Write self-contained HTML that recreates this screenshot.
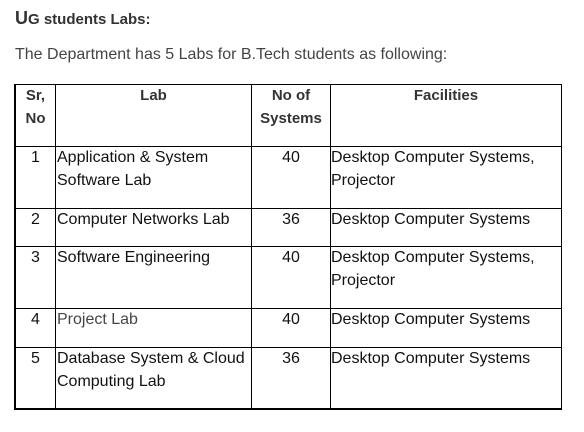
<!DOCTYPE html>
<html><head><style>
body{margin:0;width:584px;height:432px;background:#fff;font-family:"Liberation Sans",Arial,sans-serif;position:relative;overflow:hidden}
.a{position:absolute;white-space:nowrap}
.h{font-weight:bold;color:#333;font-size:15px;text-align:center;line-height:23px}
.t{font-size:16px;color:#111;line-height:23px}
.l{position:absolute;background:#000}
</style></head><body>
<div class="a" style="left:15px;top:8px;font-weight:bold;color:#333;font-size:15px"><span style="font-size:18px">U</span>G students Labs:</div>
<div class="a" style="left:15px;top:46px;font-size:16px;color:#444">The Department has 5 Labs for B.Tech students as following:</div>
<!-- borders -->
<div class="l" style="left:14px;top:84px;width:2px;height:326px"></div>
<div class="l" style="left:561px;top:84px;width:1px;height:326px"></div>
<div class="l" style="left:14px;top:84px;width:548px;height:1px"></div>
<div class="l" style="left:14px;top:146px;width:548px;height:1px"></div>
<div class="l" style="left:14px;top:208px;width:548px;height:1px"></div>
<div class="l" style="left:14px;top:246px;width:548px;height:1px"></div>
<div class="l" style="left:14px;top:308px;width:548px;height:1px"></div>
<div class="l" style="left:14px;top:347px;width:548px;height:1px"></div>
<div class="l" style="left:14px;top:408px;width:548px;height:2px"></div>
<div class="l" style="left:55px;top:84px;width:1px;height:326px"></div>
<div class="l" style="left:251px;top:84px;width:1px;height:326px"></div>
<div class="l" style="left:330px;top:84px;width:1px;height:326px"></div>
<!-- header -->
<div class="a h" style="left:16px;width:39px;top:84px">Sr,<br>No</div>
<div class="a h" style="left:56px;width:195px;top:84px">Lab</div>
<div class="a h" style="left:252px;width:78px;top:84px">No of<br>Systems</div>
<div class="a h" style="left:331px;width:230px;top:84px">Facilities</div>
<!-- rows -->
<div class="a t" style="left:16px;width:39px;text-align:center;top:146px">1</div>
<div class="a t" style="left:57px;top:146px">Application &amp; System<br>Software Lab</div>
<div class="a t" style="left:252px;width:78px;text-align:center;top:146px">40</div>
<div class="a t" style="left:331px;top:146px">Desktop Computer Systems,<br>Projector</div>

<div class="a t" style="left:16px;width:39px;text-align:center;top:208px">2</div>
<div class="a t" style="left:57px;top:208px">Computer Networks Lab</div>
<div class="a t" style="left:252px;width:78px;text-align:center;top:208px">36</div>
<div class="a t" style="left:331px;top:208px">Desktop Computer Systems</div>

<div class="a t" style="left:16px;width:39px;text-align:center;top:246px">3</div>
<div class="a t" style="left:57px;top:246px">Software Engineering</div>
<div class="a t" style="left:252px;width:78px;text-align:center;top:246px">40</div>
<div class="a t" style="left:331px;top:246px">Desktop Computer Systems,<br>Projector</div>

<div class="a t" style="left:16px;width:39px;text-align:center;top:308px">4</div>
<div class="a t" style="left:57px;top:308px;color:#444">Project Lab</div>
<div class="a t" style="left:252px;width:78px;text-align:center;top:308px">40</div>
<div class="a t" style="left:331px;top:308px">Desktop Computer Systems</div>

<div class="a t" style="left:16px;width:39px;text-align:center;top:347px">5</div>
<div class="a t" style="left:57px;top:347px">Database System &amp; Cloud<br>Computing Lab</div>
<div class="a t" style="left:252px;width:78px;text-align:center;top:347px">36</div>
<div class="a t" style="left:331px;top:347px">Desktop Computer Systems</div>
</body></html>
